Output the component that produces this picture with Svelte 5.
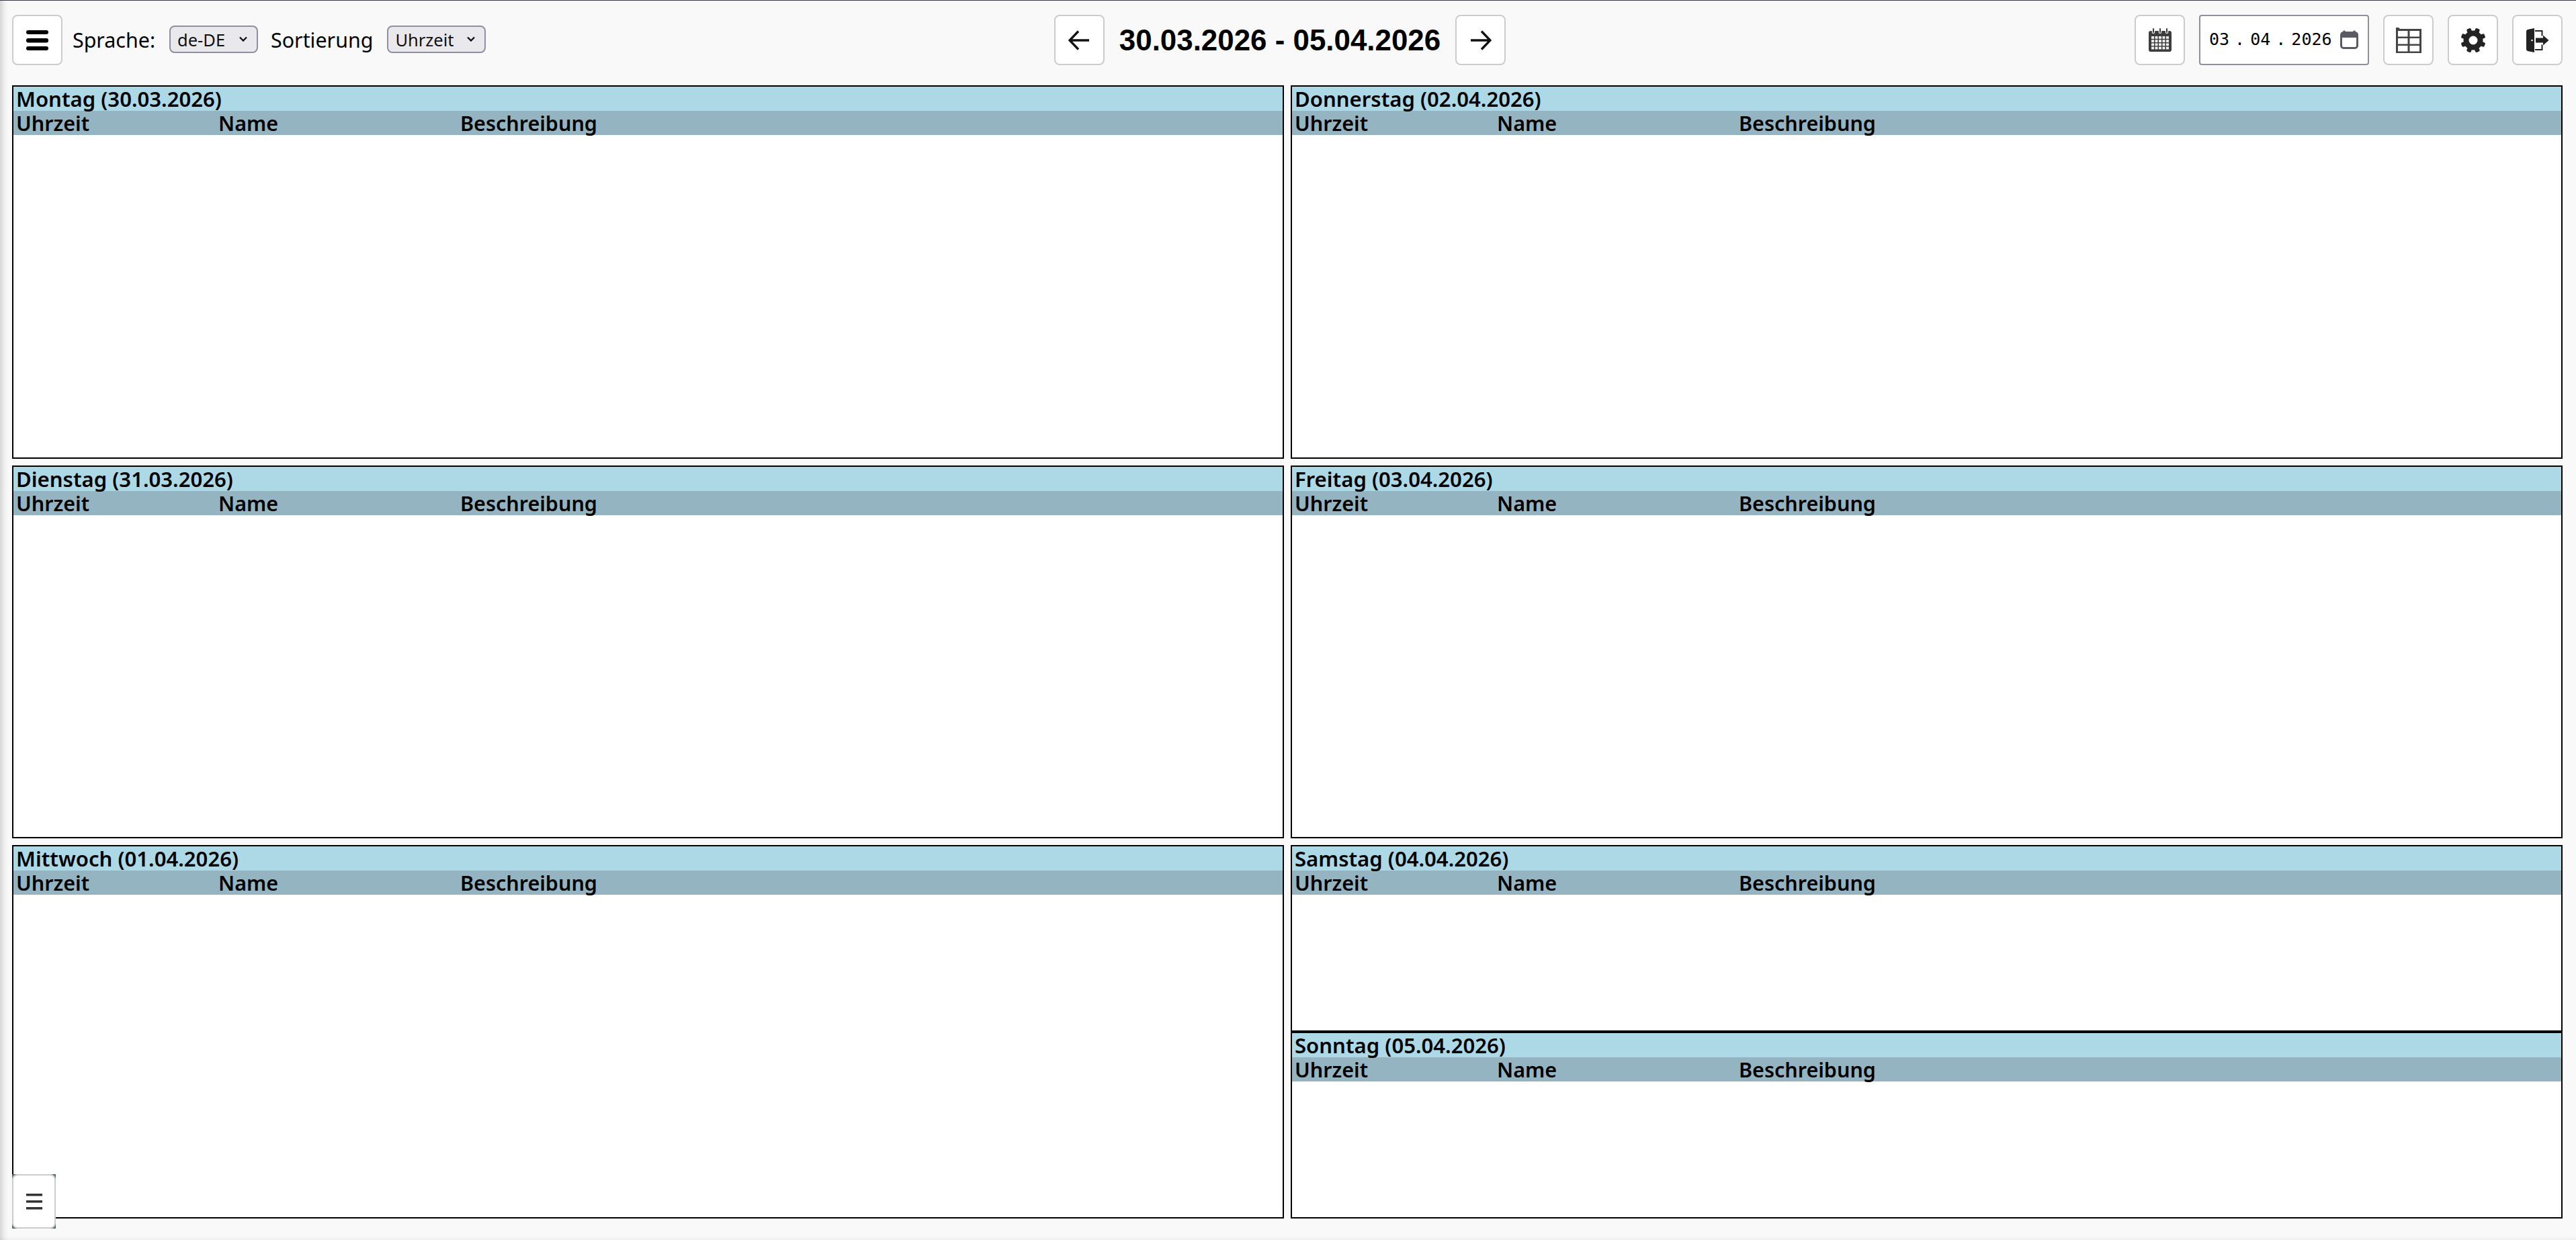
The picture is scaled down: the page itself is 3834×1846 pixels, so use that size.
<script>
let days = [
	{ name: "Montag", date: "30.03.2026" },
	{ name: "Dienstag", date: "31.03.2026" },
	{ name: "Mittwoch", date: "01.04.2026" },
	{ name: "Donnerstag", date: "02.04.2026" },
	{ name: "Freitag", date: "03.04.2026" },
];
let weekend = [
	{ name: "Samstag", date: "04.04.2026" },
	{ name: "Sonntag", date: "05.04.2026" },
];
let gearTeeth = [22.5, 67.5, 112.5, 157.5, 202.5, 247.5, 292.5, 337.5];
let calCells = [];
for (let r = 0; r < 4; r++) {
	for (let c = 0; c < 5; c++) {
		calCells.push({ x: 4 + c * 5.5, y: 12 + r * 5.2 });
	}
}
</script>

{#snippet day(d)}
	<section class="panel">
		<div class="title">{d.name} ({d.date})</div>
		<div class="cols">
			<span class="time">Uhrzeit</span>
			<span class="who">Name</span>
			<span>Beschreibung</span>
		</div>
	</section>
{/snippet}

<div class="page">
	<header class="bar">
		<div class="group">
			<button class="btn" aria-label="Menü">
				<svg width="33" height="30" viewBox="0 0 33 30">
					<rect x="0" y="0" width="33" height="6" rx="3" />
					<rect x="0" y="12" width="33" height="6.5" rx="3" />
					<rect x="0" y="24" width="33" height="6" rx="3" />
				</svg>
			</button>
			<label class="lbl" for="lang">Sprache:</label>
			<div class="sel lang">
				<select id="lang"><option>de-DE</option></select>
				<svg class="chev" width="12" height="8" viewBox="0 0 12 8"><path d="M1 1.5 L6 6.5 L11 1.5" /></svg>
			</div>
			<label class="lbl sort" for="sort">Sortierung</label>
			<div class="sel sorting">
				<select id="sort"><option>Uhrzeit</option></select>
				<svg class="chev" width="12" height="8" viewBox="0 0 12 8"><path d="M1 1.5 L6 6.5 L11 1.5" /></svg>
			</div>
		</div>

		<div class="group center">
			<button class="btn" aria-label="Zurück">
				<svg class="arrow" width="32" height="30" viewBox="0 0 32 30"><path d="M31 15 H2 M15 1.5 L2 15 L15 28.5" /></svg>
			</button>
			<h1>30.03.2026 - 05.04.2026</h1>
			<button class="btn" aria-label="Weiter">
				<svg class="arrow" width="32" height="30" viewBox="0 0 32 30"><path d="M1 15 H30 M17 1.5 L30 15 L17 28.5" /></svg>
			</button>
		</div>

		<div class="group right">
			<button class="btn" aria-label="Kalender">
				<svg width="34" height="35" viewBox="0 0 34 35">
					<rect x="0" y="4" width="34" height="31" rx="3" fill="#3d3d3d" />
					{#each [7, 17, 27] as x}
						<rect x={x - 2.2} y="0" width="4.4" height="8" rx="2" fill="#fafafa" />
						<rect x={x - 1} y="0" width="2" height="7" rx="1" fill="#3d3d3d" />
					{/each}
					{#each calCells as cell}
						<rect x={cell.x} y={cell.y} width="4" height="3.8" fill="#eee" />
					{/each}
				</svg>
			</button>
			<div class="date">
				<span>03</span><span>.</span><span>04</span><span>.</span><span>2026</span>
				<svg width="27" height="28" viewBox="0 0 27 28">
					<path d="M6 0.5 V4 M21 0.5 V4" stroke="#5b5b66" stroke-width="3" fill="none" />
					<rect x="1.5" y="3.5" width="24" height="23" rx="3.5" fill="none" stroke="#5b5b66" stroke-width="3" />
					<rect x="1.5" y="3.5" width="24" height="7.5" fill="#5b5b66" />
				</svg>
			</div>
			<button class="btn" aria-label="Tabelle">
				<svg width="38" height="38" viewBox="0 0 38 38">
					<path d="M0 0 H4 L6 2 H38 V38 H0 Z" fill="#444" />
					<rect x="3" y="5" width="14.5" height="8.5" fill="#fff" />
					<rect x="20.5" y="5" width="14.5" height="8.5" fill="#fff" />
					<rect x="3" y="16" width="14.5" height="8.5" fill="#fff" />
					<rect x="20.5" y="16" width="14.5" height="8.5" fill="#fff" />
					<rect x="3" y="27" width="14.5" height="8.5" fill="#fff" />
					<rect x="20.5" y="27" width="14.5" height="8.5" fill="#fff" />
				</svg>
			</button>
			<button class="btn" aria-label="Einstellungen">
				<svg width="36" height="38" viewBox="-18 -19 36 38">
					{#each gearTeeth as a}
						<rect x="-3.4" y="-18.6" width="6.8" height="8" rx="2" fill="#222" transform="rotate({a})" />
					{/each}
					<circle r="10.5" fill="none" stroke="#222" stroke-width="8" />
				</svg>
			</button>
			<button class="btn" aria-label="Abmelden">
				<svg width="38" height="38" viewBox="0 0 38 38">
					<path d="M2 6 Q2 3.5 4 3 L14 1 V37 L4 35 Q2 34.5 2 32 Z" fill="#222" />
					<circle cx="10.5" cy="19" r="1.3" fill="#fff" />
					<path d="M15 5 H25.5 V12.5 M15 33 H25.5 V25.5" fill="none" stroke="#222" stroke-width="2" />
					<path d="M16 15.5 H27 V11.5 L35.5 19 L27 26.5 V22.5 H16 Z" fill="#222" />
				</svg>
			</button>
		</div>
	</header>

	<main class="week">
		{#each days as d}
			{@render day(d)}
		{/each}
		<div class="stack">
			{#each weekend as d}
				{@render day(d)}
			{/each}
		</div>
	</main>

	<button class="side" aria-label="Seitenleiste">
		<span class="side-inner">
			<svg width="24" height="24" viewBox="0 0 24 24">
				<rect x="0" y="0" width="24" height="3.5" />
				<rect x="0" y="10" width="24" height="3.5" />
				<rect x="0" y="20" width="24" height="3.5" />
			</svg>
		</span>
	</button>
</div>

<style>
	:global(body) {
		background: #f9f9f9;
	}
	.page {
		position: relative;
		box-sizing: border-box;
		height: 100vh;
		display: flex;
		flex-direction: column;
		border-top: 1px solid #3a3a45;
		box-shadow: inset 11px 0 9px -7px rgba(0, 0, 0, 0.16), inset 0 -7px 6px -6px rgba(0, 0, 0, 0.07);
		font-family: "Noto Sans", "Open Sans", sans-serif;
		color: #000;
	}
	.bar {
		display: grid;
		grid-template-columns: 1fr auto 1fr;
		align-items: center;
		padding: 21px 20px 30px 18px;
	}
	.group {
		display: flex;
		align-items: center;
	}
	.center {
		margin-right: 22px;
		gap: 22px;
	}
	.right {
		justify-content: flex-end;
		gap: 21px;
	}
	.btn {
		box-sizing: border-box;
		width: 75px;
		height: 75px;
		padding: 0;
		display: flex;
		align-items: center;
		justify-content: center;
		background: #fff;
		border: 2px solid #ccc;
		border-radius: 8px;
	}
	.arrow path {
		fill: none;
		stroke: #111;
		stroke-width: 3.4;
	}
	h1 {
		margin: 0;
		font-family: "Liberation Sans", Arial, sans-serif;
		font-size: 43.9px;
		font-weight: 700;
		line-height: 75px;
	}
	.lbl {
		margin-left: 15px;
		font-size: 30.4px;
		line-height: 36px;
	}
	.lbl.sort {
		margin-left: 19px;
	}
	.sel {
		position: relative;
		margin-left: 21px;
		margin-top: -2px;
	}
	.sel select {
		display: block;
		box-sizing: border-box;
		height: 41px;
		padding: 0 0 0 10px;
		appearance: none;
		background: #e9e9ed;
		border: 2px solid #8f8f9d;
		border-radius: 8px;
		font-family: inherit;
		font-size: 25.5px;
		color: #111;
	}
	.lang select {
		width: 132px;
	}
	.sorting select {
		width: 147px;
	}
	.chev {
		position: absolute;
		right: 16px;
		top: 16px;
	}
	.chev path {
		fill: none;
		stroke: #111;
		stroke-width: 2.4;
	}
	.date {
		box-sizing: border-box;
		width: 253px;
		height: 75px;
		display: flex;
		align-items: center;
		gap: 8px;
		padding: 0 14px 2px 13px;
		background: #fff;
		border: 2px solid #8f8f9d;
		border-radius: 4px;
		font-family: "DejaVu Sans Mono", "Liberation Mono", monospace;
		font-size: 25px;
	}
	.date svg {
		margin-left: auto;
	}
	.week {
		flex: 1;
		min-height: 0;
		display: grid;
		grid-template-columns: 1fr 1fr;
		grid-template-rows: repeat(3, 1fr);
		grid-auto-flow: column;
		gap: 10px;
		padding: 0 20px 32px 18px;
	}
	.panel {
		flex: 1;
		min-height: 0;
		box-sizing: border-box;
		background: #fff;
		border: 2px solid #000;
		font-size: 30.5px;
		font-weight: 600;
		line-height: 36px;
	}
	.stack {
		display: flex;
		flex-direction: column;
		min-height: 0;
	}
	.title {
		padding-left: 4px;
		background: #add8e6;
		font-size: 31.1px;
	}
	.cols {
		display: flex;
		padding-left: 4px;
		background: #95b4c1;
	}
	.time {
		width: 301px;
	}
	.who {
		width: 360px;
	}
	.side {
		position: absolute;
		left: 18px;
		bottom: 17px;
		width: 65px;
		height: 81px;
		padding: 0;
		border: 0;
		background: #5c6b70;
	}
	.side-inner {
		box-sizing: border-box;
		height: 100%;
		display: flex;
		align-items: center;
		justify-content: center;
		background: #fff;
		border: 2px solid #ccc;
		border-radius: 8px;
	}
	.side-inner rect {
		fill: #333;
	}
</style>
